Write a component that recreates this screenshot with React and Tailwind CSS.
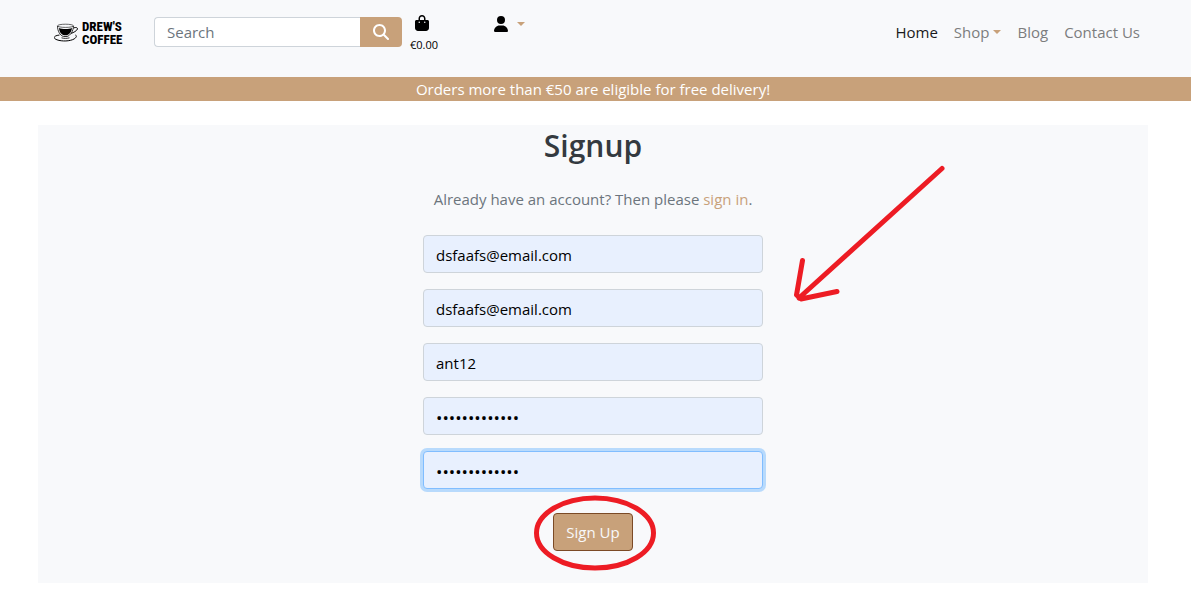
import { FaBagShopping, FaMagnifyingGlass, FaUser } from "react-icons/fa6";

function Caret() {
  return (
    <span
      aria-hidden="true"
      className="inline-block border-x-4 border-t-4 border-x-transparent border-t-[#c8a17a]"
    />
  );
}

function Logo() {
  return (
    <a href="#home" aria-label="Drew's Coffee" className="mt-5 flex w-[68px] items-center gap-1 text-black">
      <svg viewBox="0 0 24 20" className="h-5 w-6 shrink-0" fill="none" stroke="currentColor" strokeWidth="1">
        <ellipse cx="11.5" cy="2.8" rx="8" ry="1.6" strokeWidth="0.6" />
        <path d="M3.5 3 C3.5 8 6 12.5 9.5 13.5 H13 C16.5 12.5 19.3 8 19.5 3" strokeWidth="0.8" />
        <path
          d="M5 5 C8 6.4 15 6.4 18 5 C17.6 8.5 15.5 11.5 13 12.2 H9.7 C7.2 11.5 5.2 8.5 5 5 Z"
          fill="currentColor"
          stroke="none"
        />
        <path d="M19.5 5 C21 4.2 24 4.4 23.5 6 C22.7 8 19.5 9.5 17.2 10.4" />
        <path d="M5.5 12 C-1 12.8 -1 15.5 3 16.8 C8 18.6 16 18.3 20 16 C22.5 14.5 23 12.8 21.5 12" />
        <path d="M7.5 14.8 C10 15.6 13 15.6 15.5 14.8" strokeWidth="0.8" />
      </svg>
      <span className="flex flex-col font-['Roboto_Condensed','Open_Sans_Condensed',Roboto,sans-serif] text-[13px] font-extrabold leading-[13px]">
        <span>DREW'S</span>
        <span>COFFEE</span>
      </span>
    </a>
  );
}

const links = [
  { label: "Home", active: true },
  { label: "Shop", menu: true },
  { label: "Blog" },
  { label: "Contact Us" },
];

function Header() {
  return (
    <header className="bg-[#f8f9fb] pr-[5px]">
      <div className="mx-auto flex h-[77px] max-w-[1110px] items-start justify-between pl-4">
        <div className="flex items-start">
          <Logo />
          <form className="ml-8 mt-[17px] flex" onSubmit={(e) => e.preventDefault()}>
            <input
              type="search"
              aria-label="Search"
              placeholder="Search"
              className="h-[30px] w-[206px] rounded-l border border-r-0 border-[#ced4da] bg-white px-3 text-[15px] text-[#495057] outline-none placeholder:text-[#6c757d]"
            />
            <button
              type="submit"
              aria-label="Submit search"
              className="flex h-[30px] w-[42px] items-center justify-center rounded-r bg-[#c8a17a] text-white"
            >
              <FaMagnifyingGlass className="size-4" />
            </button>
          </form>
          <a href="#bag" className="ml-2 mt-[15px] flex flex-col text-black">
            <FaBagShopping className="ml-1 size-4" />
            <span className="mt-1 text-[11px] leading-5">€0.00</span>
          </a>
          <button type="button" aria-label="Account" className="ml-[55px] mt-4 flex items-center gap-2 text-black">
            <FaUser className="size-4" />
            <Caret />
          </button>
        </div>
        <nav className="mt-5 flex gap-4 pr-2 text-[15px] leading-6">
          {links.map((link) => (
            <a
              key={link.label}
              href="#nav"
              className={link.active ? "text-[#191a1b]" : "flex items-center gap-1 text-[#7c7d7e]"}
            >
              {link.label}
              {link.menu && <Caret />}
            </a>
          ))}
        </nav>
      </div>
    </header>
  );
}

const fields = [
  { id: "email", label: "E-mail", type: "email", value: "dsfaafs@email.com" },
  { id: "email2", label: "E-mail confirmation", type: "email", value: "dsfaafs@email.com" },
  { id: "username", label: "Username", type: "text", value: "ant12" },
  { id: "password", label: "Password", type: "password", value: "coffeebeans12" },
  { id: "password2", label: "Password again", type: "password", value: "coffeebeans12", current: true },
];

function Field({ field }) {
  return (
    <input
      id={field.id}
      aria-label={field.label}
      type={field.type}
      defaultValue={field.value}
      className={
        "h-[38px] w-full rounded border bg-[#e8f0fe] px-3 pt-0.5 text-black outline-none " +
        (field.type === "password" ? "text-[17px] " : "text-[15px] ") +
        (field.current ? "border-[#80bdff] ring-3 ring-[#b8dafc]" : "border-[#ced4da]")
      }
    />
  );
}

function Arrow() {
  return (
    <svg
      aria-hidden="true"
      viewBox="0 0 152 138"
      className="pointer-events-none absolute left-1/2 top-[39px] ml-[200px] h-[138px] w-[152px]"
      fill="none"
      stroke="#ed1c24"
      strokeWidth="5"
      strokeLinecap="round"
      strokeLinejoin="round"
    >
      <path d="M149 4.5 L6 134 M9.5 96.5 L3.5 131 L8 135 L44 127.5" />
    </svg>
  );
}

export default function App() {
  return (
    <div className="bg-white font-['Open_Sans','Noto_Sans',sans-serif] text-[15px]">
      <Header />
      <p className="bg-[#c8a17a] pr-[5px] text-center leading-6 text-white">
        Orders more than €50 are eligible for free delivery!
      </p>
      <main className="py-6 pr-[5px]">
        <section className="relative mx-auto flex max-w-[1110px] flex-col items-center bg-[#f8f9fb] pb-8">
          <h1 className="mt-0.5 text-[30px] font-semibold leading-[38px] text-[#343a40]">Signup</h1>
          <p className="mt-[22px] leading-6 text-[#6c757d]">
            Already have an account? Then please{" "}
            <a href="#signin" className="text-[#c8a17a]">
              sign in
            </a>
            .
          </p>
          <form
            className="mt-6 flex w-[340px] max-w-full flex-col items-center gap-4"
            onSubmit={(e) => e.preventDefault()}
          >
            {fields.map((field) => (
              <Field key={field.id} field={field} />
            ))}
            <div className="relative mt-2">
              <button
                type="submit"
                className="h-[38px] rounded border border-[#7b4a26] bg-[#c8a17a] px-3 text-[#f8f9fa]"
              >
                Sign Up
              </button>
              <svg
                aria-hidden="true"
                viewBox="0 0 122 76"
                className="pointer-events-none absolute -left-[19px] -top-[18px] h-[76px] w-[122px] max-w-none"
              >
                <ellipse cx="61" cy="38" rx="58.5" ry="35" fill="none" stroke="#ed1c24" strokeWidth="5" />
              </svg>
            </div>
          </form>
          <Arrow />
        </section>
      </main>
    </div>
  );
}
